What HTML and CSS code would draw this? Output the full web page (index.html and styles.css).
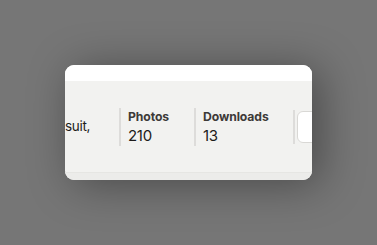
FILE: index.html
```html
<!DOCTYPE html>
<html lang="en">
<head>
<meta charset="utf-8">
<link rel="stylesheet" href="styles.css">
</head>
<body>
<div class="stage">
  <div class="card">
    <div class="card-top"></div>
    <div class="card-body">
      <div class="row">
        <p class="desc">suit,</p>
        <div class="stat stat-photos">
          <div class="stat-label">Photos</div>
          <div class="stat-value">210</div>
        </div>
        <div class="stat stat-downloads">
          <div class="stat-label">Downloads</div>
          <div class="stat-value">13</div>
        </div>
        <div class="action">
          <button class="btn" type="button"></button>
        </div>
      </div>
    </div>
    <div class="card-bottom"></div>
  </div>
</div>
</body>
</html>
```
FILE: styles.css
```css
html, body {
  margin: 0;
  padding: 0;
  background: #767676;
}
body {
  font-family: Inter, "Noto Sans", sans-serif;
}
.stage {
  width: 377px;
  height: 245px;
  display: flex;
  align-items: center;
  justify-content: center;
}
.card {
  width: 247px;
  height: 115px;
  border-radius: 9px;
  overflow: hidden;
  background: #f2f2f0;
  display: flex;
  flex-direction: column;
  box-shadow: 8px 4px 44px rgba(0, 0, 0, 0.38);
}
.card-top {
  height: 16px;
  background: #ffffff;
  flex-shrink: 0;
}
.card-body {
  flex: 1;
  display: flex;
  align-items: center;
  overflow: hidden;
}
.row {
  display: flex;
  align-items: center;
}
.desc {
  margin: 0;
  width: 54px;
  font-size: 13.5px;
  letter-spacing: -0.3px;
  color: #1f1d1c;
  white-space: nowrap;
  flex-shrink: 0;
  padding-bottom: 2px;
}
.stat {
  box-sizing: border-box;
  flex-shrink: 0;
  border-left: 2px solid #dddcda;
  padding: 1px 0 3px 7px;
  height: 38px;
}
.stat-photos {
  width: 75px;
}
.stat-downloads {
  width: 99px;
}
.stat-label {
  font-size: 12.2px;
  font-weight: 700;
  color: #3d3a38;
  line-height: 16px;
  letter-spacing: -0.1px;
}
.stat-value {
  font-size: 15px;
  color: #1d1b1a;
  line-height: 21px;
  letter-spacing: -0.3px;
}
.action {
  flex-shrink: 0;
  border-left: 2px solid #dddcda;
  padding-left: 2px;
  height: 34px;
  display: flex;
  align-items: center;
}
.btn {
  width: 80px;
  height: 32px;
  background: #ffffff;
  border: 1px solid #d9d8d5;
  border-radius: 6px;
  padding: 0;
}
.card-bottom {
  height: 7px;
  flex-shrink: 0;
  background: #ececea;
  border-top: 1px solid #e6e6e3;
}
```
